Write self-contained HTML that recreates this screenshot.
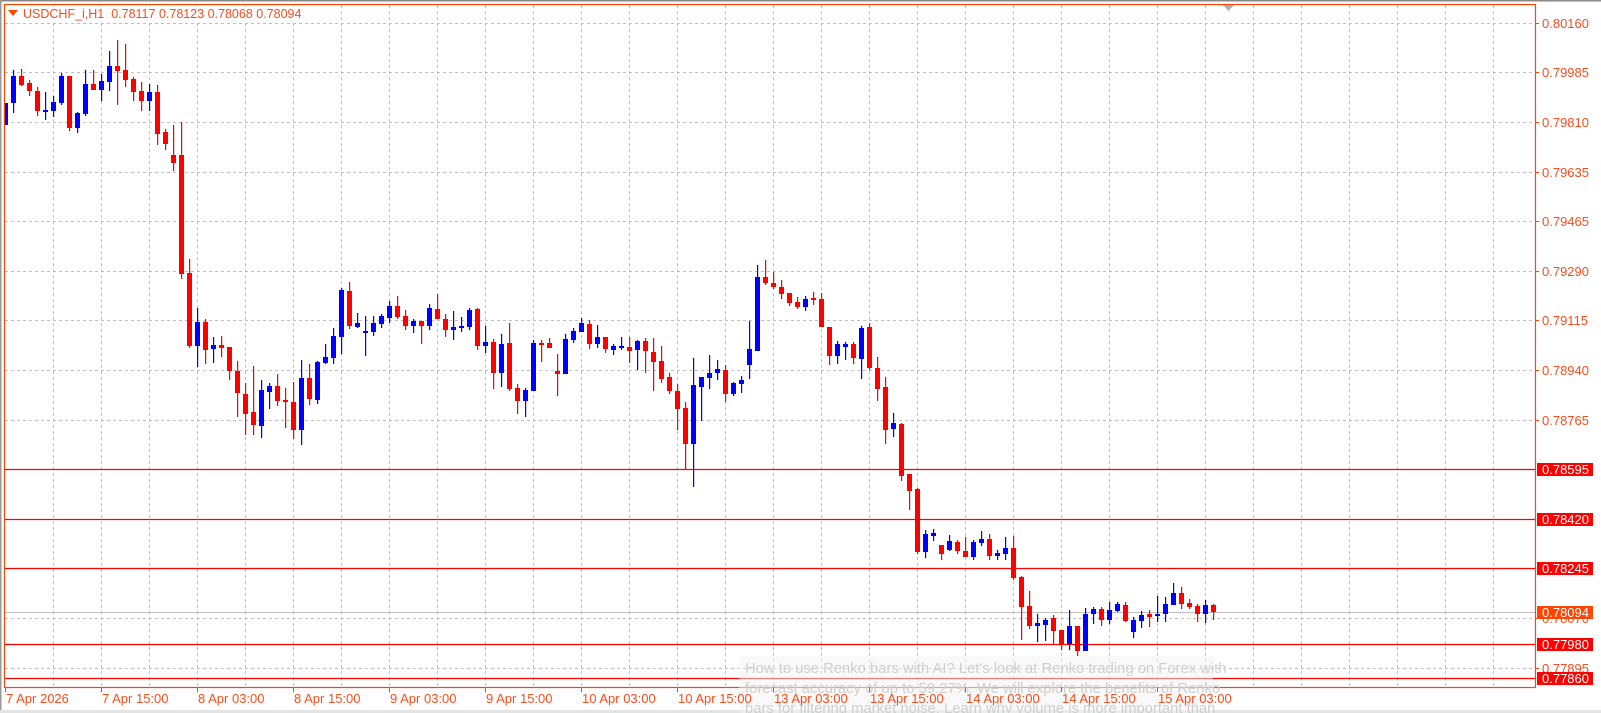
<!DOCTYPE html>
<html><head><meta charset="utf-8"><style>
html,body{margin:0;padding:0;background:#fff;width:1601px;height:713px;overflow:hidden}
svg{display:block}
text{font-family:"Liberation Sans",sans-serif}
</style></head><body>
<svg id="s" width="1601" height="713" xmlns="http://www.w3.org/2000/svg">
<rect x="0" y="0" width="1601" height="713" fill="#fff"/>
<rect x="0" y="0" width="1601" height="1.5" fill="#888"/>
<rect x="0" y="0" width="1.5" height="713" fill="#999"/>
<rect x="0" y="710" width="1601" height="3" fill="#e4e4e4"/>
<g id="grid"></g>
<g id="hl"></g>
<g id="cd"></g>
<rect x="4.5" y="4.5" width="1531" height="683" fill="none" stroke="#ff4500" stroke-width="1.2"/>
<polygon points="1223,5 1234,5 1228.5,11" fill="#b0b0b0"/>
<rect x="739" y="656" width="474" height="57" rx="3" fill="#f4f4f4" fill-opacity="0.5"/>
<g fill="#cfcfcf" font-size="14.8">
<text x="745" y="673">How to use Renko bars with AI? Let's look at Renko trading on Forex with</text>
<text x="745" y="693">forecast accuracy of up to 59.27%. We will explore the benefits of Renko</text>
<text x="745" y="713">bars for filtering market noise. Learn why volume is more important than</text>
</g>
<g id="lab"></g>
<rect x="6" y="6" width="290" height="15" fill="#fff"/>
<polygon points="8,10 18,10 13,16" fill="#ff4500"/>
<text x="23" y="18" font-size="12.5" fill="#ff4a1a">USDCHF_i,H1&#160;&#160;0.78117 0.78123 0.78068 0.78094</text>
</svg>
<script>
var NS="http://www.w3.org/2000/svg";
function el(p,t,a,txt){var e=document.createElementNS(NS,t);for(var k in a)e.setAttribute(k,a[k]);if(txt)e.textContent=txt;document.getElementById(p).appendChild(e);return e;}
for(var k=1;k<=31;k++){var x=5+48*k+0.5;if(x<1535)el("grid","line",{x1:x,y1:5,x2:x,y2:687,stroke:"#c0c0c0","stroke-dasharray":"3,3","stroke-width":1});}
var gy=[];for(var k=0;k<=12;k++)gy.push(618-49.6*k);gy.push(668);
gy.forEach(function(y){y=Math.round(y)+0.5;el("grid","line",{x1:5,y1:y,x2:1535,y2:y,stroke:"#c0c0c0","stroke-dasharray":"3,3","stroke-width":1});});
[469,519,568,644,678].forEach(function(y){el("hl","line",{x1:5,y1:y+0.5,x2:1535,y2:y+0.5,stroke:"#ff0000","stroke-width":1.2});});
el("hl","line",{x1:5,y1:612.5,x2:1535,y2:612.5,stroke:"#c0c0c0","stroke-width":1});
var C=[[125,103,103,125],[103,76,70,113],[76,85,69,86],[83,91,80,96],[91,111,87,116],[112,110,92,120],[111,102,96,117],[103,76,73,105],[76,128,76,131],[128,113,112,133],
[114,84,70,116],[84,90,70,90],[90,81,74,101],[82,66,51,91],[66,71,40,105],[70,80,44,87],[79,92,77,101],[91,101,82,111],[101,92,84,111],[92,134,85,145],
[132,144,129,150],[155,163,125,171],[155,274,122,279],[273,346,259,348],[346,322,308,367],[322,350,319,364],[349,345,337,363],[345,348,336,357],[347,371,347,380],[371,393,361,417],
[394,414,383,435],[412,425,366,435],[426,390,380,438],[392,386,383,409],[386,401,374,406],[400,402,388,428],[402,430,382,439],[430,378,360,445],[378,399,364,405],[400,362,361,404],
[363,357,344,364],[358,336,328,364],[337,290,288,354],[291,326,282,329],[327,323,313,328],[333,331,316,356],[332,323,316,336],[324,316,314,328],[318,306,301,323],[306,317,296,319],
[316,326,310,330],[326,321,319,333],[321,326,321,344],[326,308,304,330],[309,319,294,319],[319,330,314,337],[330,327,311,340],[328,326,317,332],[327,310,308,330],[309,346,308,350],
[346,342,326,353],[342,373,339,389],[373,344,334,387],[343,389,323,391],[388,401,384,414],[401,390,388,417],[391,343,340,391],[343,345,340,362],[343,348,338,348],[371,374,354,396],
[374,339,334,374],[340,331,328,343],[332,323,318,332],[324,344,320,349],[344,337,325,348],[337,349,337,353],[350,346,344,355],[348,346,337,350],[347,351,337,363],[350,341,340,370],
[341,351,338,373],[352,362,338,391],[361,379,346,383],[377,391,373,394],[391,409,384,430],[408,444,402,470],[444,385,358,487],[387,377,377,421],[378,373,355,389],[373,369,360,380],
[370,394,365,402],[394,383,382,396],[384,380,376,393],[365,349,321,379],[351,277,265,351],[277,283,260,285],[283,287,272,289],[287,294,280,299],[293,303,293,306],[302,307,297,309],
[307,299,296,311],[298,300,292,305],[299,327,293,327],[327,356,327,365],[356,344,341,364],[347,344,342,360],[344,358,342,364],[359,328,326,379],[327,368,323,370],[368,389,357,401],
[387,430,377,444],[429,423,413,437],[424,476,423,481],[474,491,474,510],[489,552,488,554],[552,534,530,558],[536,533,529,541],[545,554,545,560],[550,541,535,551],[542,551,540,554],
[551,557,537,557],[557,542,540,560],[543,539,531,546],[539,556,534,560],[556,553,550,560],[554,548,537,560],[548,578,536,580],[577,607,576,640],[606,626,591,629],[626,623,614,642],
[625,620,618,641],[618,631,615,644],[630,644,630,650],[644,626,610,650],[626,651,626,656],[651,614,608,651],[614,609,607,624],[609,620,607,626],[620,610,602,624],[611,604,602,612],
[605,621,602,622],[632,620,617,638],[621,615,611,628],[614,617,610,627],[616,614,596,622],[614,604,597,622],[605,593,583,605],[593,604,587,609],[603,607,599,609],[606,614,604,622],
[614,605,600,623],[605,612,604,620]];
C.forEach(function(c,i){
 var o=c[0],cl=c[1],h=c[2],l=c[3];var bull=cl<o;var col=bull?"#0000ff":"#ff0000";
 var x=3+8*i;var top=Math.min(o,cl),bh=Math.max(Math.abs(o-cl),2);
 var bx=x,bw=5;if(bx<5){bw-=5-bx;bx=5;}
 if(x+2>=5)el("cd","rect",{x:x+2,y:h,width:1.2,height:Math.max(l-h,1),fill:col});
 el("cd","rect",{x:bx,y:top,width:bw,height:bh,fill:col});
});
var P=[["0.80160",23],["0.79985",72],["0.79810",122],["0.79635",172],["0.79465",221],["0.79290",271],["0.79115",320],["0.78940",370],["0.78765",420],["0.78070",618],["0.77895",668]];
P.forEach(function(p){el("lab","line",{x1:1535,y1:p[1]+0.5,x2:1539,y2:p[1]+0.5,stroke:"#ff4500"});el("lab","text",{x:1542,y:p[1]+5,"font-size":"13",fill:"#ff4a1a"},p[0]);});
[["0.78595",469,"#ff0000"],["0.78420",519,"#ff0000"],["0.78245",568,"#ff0000"],["0.78094",612,"#ff4500"],["0.77980",644,"#ff0000"],["0.77860",678,"#ff0000"]].forEach(function(p){
 el("lab","rect",{x:1537,y:p[1]-6,width:56,height:13,fill:p[2]});
 el("lab","text",{x:1542,y:p[1]+5,"font-size":"13",fill:"#fff"},p[0]);});
var D=["7 Apr 2026","7 Apr 15:00","8 Apr 03:00","8 Apr 15:00","9 Apr 03:00","9 Apr 15:00","10 Apr 03:00","10 Apr 15:00","13 Apr 03:00","13 Apr 15:00","14 Apr 03:00","14 Apr 15:00","15 Apr 03:00"];
D.forEach(function(d,i){var x=5+96*i;el("lab","line",{x1:x+0.5,y1:687,x2:x+0.5,y2:692,stroke:"#ff4500"});el("lab","text",{x:x+1,y:703,"font-size":"13",fill:"#ff4a1a"},d);});
</script>
</body></html>
